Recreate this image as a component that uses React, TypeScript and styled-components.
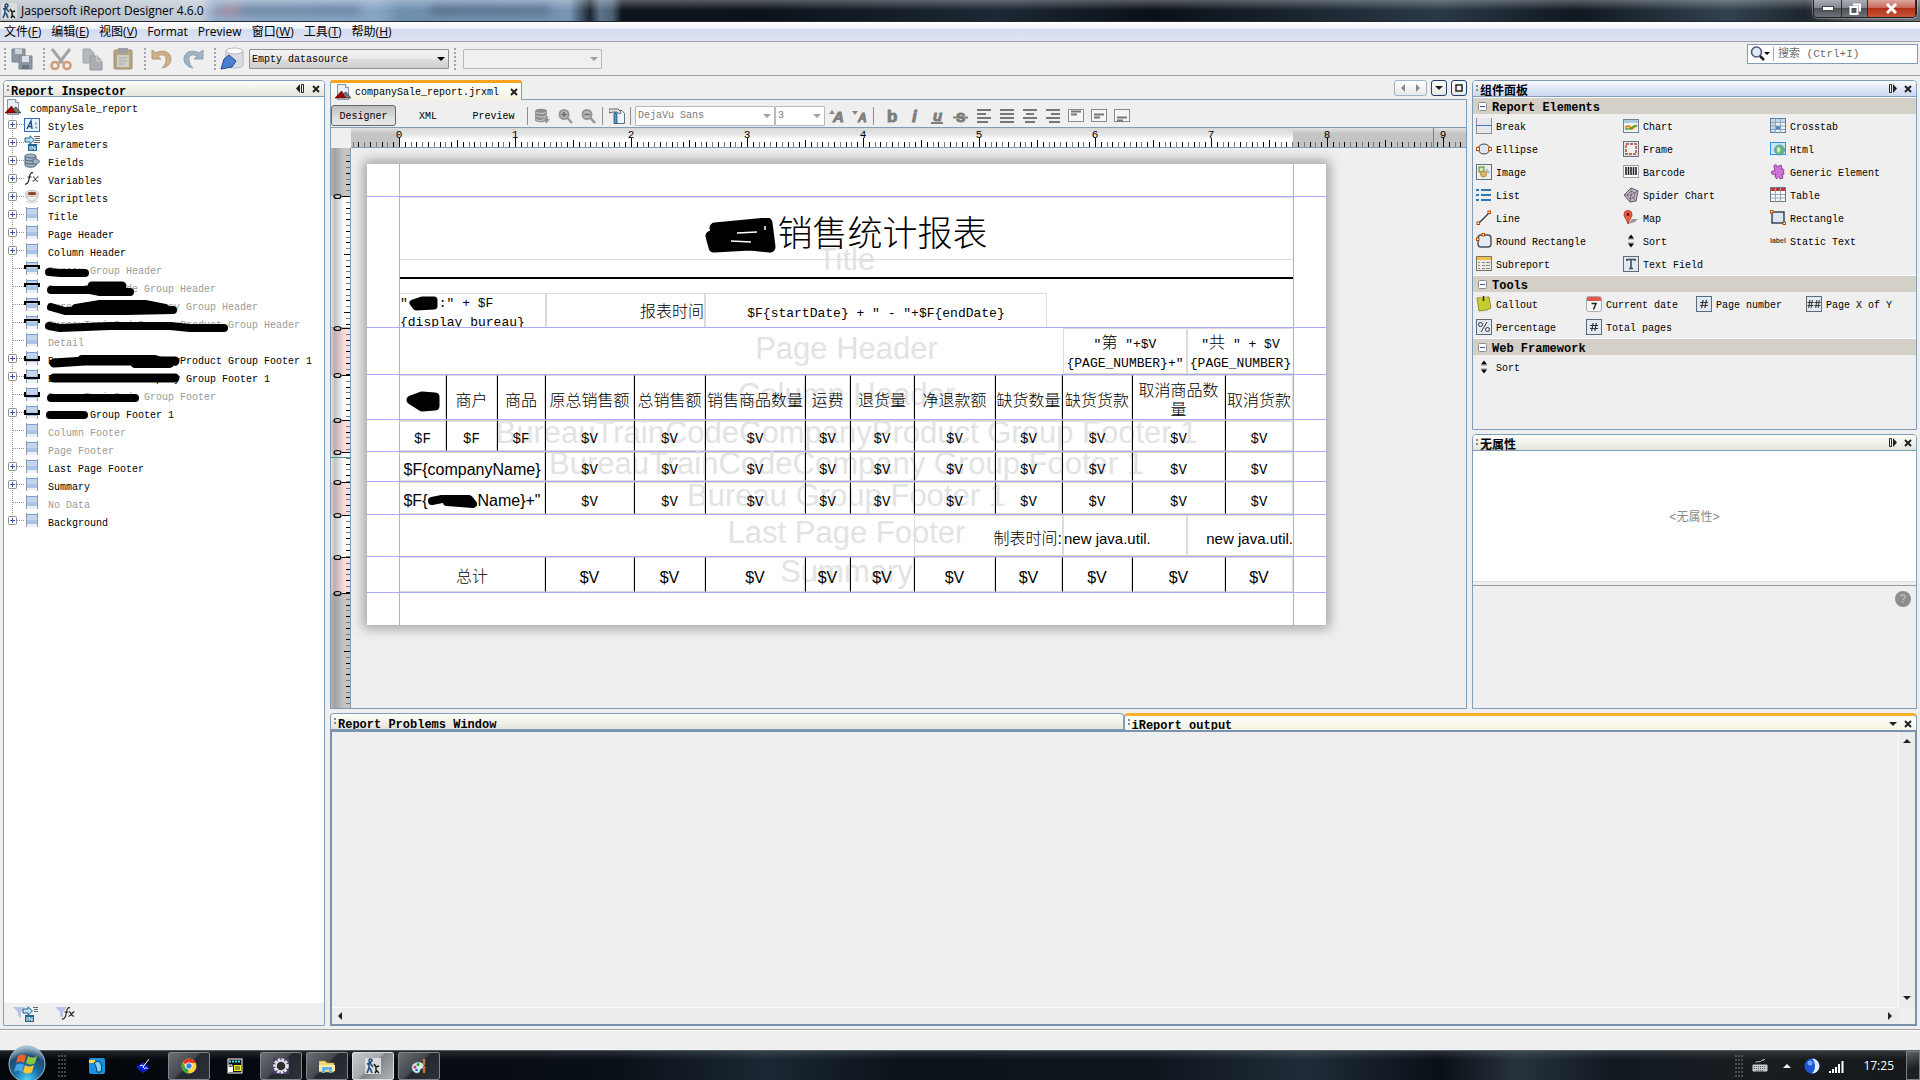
import React from "react";
import styled, { createGlobalStyle, css } from "styled-components";

const mono = '"Liberation Mono", "Noto Sans CJK SC", monospace';
const sans = '"Liberation Sans", "Noto Sans CJK SC", sans-serif';
const ui = '"Open Sans", "Noto Sans CJK SC", sans-serif';
const line = "#7f9db9";

const GlobalStyle = createGlobalStyle`
  * { box-sizing: border-box; }
  html, body { margin: 0; height: 100%; overflow: hidden; }
  body { background: #efefef; color: #000; font: 10px/16px ${mono}; }
  button { font: inherit; color: inherit; background: none; border: 0; padding: 0; margin: 0; text-align: left; }
  svg { display: block; flex: none; }
`;

const Shell = styled.div`
  display: flex;
  flex-direction: column;
  height: 100vh;
`;

/* ---------- window frame ---------- */
const TitleBar = styled.header`
  position: relative;
  display: flex;
  align-items: center;
  justify-content: space-between;
  height: 22px;
  flex: none;
  padding-left: 1px;
  border-bottom: 1px solid #23282e;
  background:
    linear-gradient(180deg, rgba(255, 255, 255, 0.3), rgba(255, 255, 255, 0) 50%),
    linear-gradient(90deg, #b9c0c9 0, #c4ccd6 200px, #8fa9c6 216px, #86a3c4 380px, #6f8fae 400px, #7894b4 570px, #1b2632 590px, #5c7287 600px, #4f6377 612px, #0d141c 622px, #0c131b 40%, #1d2834 52%, #0a1017 60%, #2b3947 75%, #101820 82%, #33424f 90%, #1d262e 94%, #5b6167 97%, #6a6f75 100%);
`;
const TitleText = styled.h1`
  position: relative;
  display: flex;
  align-items: center;
  gap: 4px;
  margin: 0;
  font: 12px/20px ${ui};
`;
const Smudge = styled.div`
  position: absolute;
  left: 240px;
  top: 6px;
  width: 120px;
  height: 9px;
  background: #4f6683;
  opacity: 0.5;
  filter: blur(4px);
  box-shadow: 190px 0 0 #3f536b, -24px 0 0 -2px #d44;
`;
const WinButtons = styled.div`
  display: flex;
  align-self: flex-start;
  margin-right: 3px;
  border: 1px solid #1b1f24;
  border-top: 0;
  border-radius: 0 0 5px 5px;
  overflow: hidden;
  box-shadow: 0 0 0 1px rgba(255, 255, 255, 0.3);
`;
const WinButton = styled.button<{ $w: number; $close?: boolean }>`
  display: flex;
  justify-content: center;
  align-items: center;
  width: ${(p) => p.$w}px;
  height: 17px;
  border-right: 1px solid #2a2f35;
  background: ${(p) =>
    p.$close
      ? "linear-gradient(#d9a79d, #c9685a 45%, #b23118 50%, #c8553a)"
      : "linear-gradient(#a8adb3, #83898f 45%, #4b5157 50%, #6c7278)"};
`;
const MenuBar = styled.nav`
  display: flex;
  gap: 10px;
  height: 20px;
  flex: none;
  padding-left: 4px;
  border-bottom: 1px solid #a0a0a0;
  background: linear-gradient(#fff, #eef1f9 35%, #d5dcef 40%, #dee4f5);
  font: 12px/20px ${ui};
`;

/* ---------- toolbar ---------- */
const Toolbar = styled.div`
  display: flex;
  align-items: flex-start;
  justify-content: space-between;
  height: 34px;
  flex: none;
  padding: 2px 2px 0 2px;
  border-bottom: 1px solid #a0a0a0;
`;
const ToolGroup = styled.div<{ $gap: number }>`
  display: flex;
  align-items: center;
  height: 30px;
  gap: ${(p) => p.$gap}px;
`;
const Grip = styled.span<{ $wide?: boolean }>`
  width: 2px;
  height: 22px;
  flex: none;
  margin: ${(p) => (p.$wide ? "0 2px 0 0" : "0 -3px 0 2px")};
  background: repeating-linear-gradient(#a5a5a5 0 2px, transparent 2px 4px);
`;
const SelectBox = styled.span<{ $w: number; $dim?: boolean; $flat?: boolean }>`
  position: relative;
  display: block;
  width: ${(p) => p.$w}px;
  height: 20px;
  flex: none;
  select {
    appearance: none;
    width: 100%;
    height: 100%;
    margin: 0;
    padding: 1px 16px 0 2px;
    border: 1px solid ${(p) => (p.$dim ? "#b5b9c0" : "#8a8f96")};
    border-radius: 1px;
    background: ${(p) => (p.$flat ? "#fff" : p.$dim ? "#f0f0f0" : "linear-gradient(#f2f2f2, #ebebeb 48%, #ddd 52%, #cfcfcf)")};
    color: ${(p) => (p.$dim ? "#7a7a7a" : "#000")};
    opacity: 1;
    font: 10px/16px ${mono};
  }
  &::after {
    content: "";
    position: absolute;
    right: 4px;
    top: 8px;
    border: 4px solid transparent;
    border-top-color: ${(p) => (p.$dim ? "#a0a0a0" : "#000")};
  }
`;
const Search = styled.label`
  display: flex;
  align-items: center;
  gap: 3px;
  width: 171px;
  height: 20px;
  padding-left: 2px;
  border: 1px solid ${line};
  background: #fff;
  input {
    flex: 1;
    min-width: 0;
    border: 0;
    border-left: 1px solid #aaa;
    padding: 0 0 0 4px;
    height: 14px;
    outline: 0;
    background: none;
    font: 11px/14px ${mono};
  }
  input::placeholder { color: #6d6d6d; opacity: 1; }
`;

/* ---------- docking areas ---------- */
const Work = styled.main`
  display: flex;
  flex: 1;
  min-height: 0;
  gap: 5px;
  padding: 4px 3px 3px;
`;
const Column = styled.div<{ $w?: number }>`
  display: flex;
  flex-direction: column;
  gap: 4px;
  min-width: 0;
  min-height: 0;
  ${(p) => (p.$w ? css`width: ${p.$w}px; flex: none;` : css`flex: 1;`)}
`;
const TopRow = styled.div`
  display: flex;
  flex: 1;
  gap: 5px;
  min-height: 0;
`;
const Panel = styled.section<{ $h?: number }>`
  display: flex;
  flex-direction: column;
  min-height: 0;
  border: 1px solid ${line};
  border-radius: 4px 4px 0 0;
  ${(p) => (p.$h ? css`height: ${p.$h}px; flex: none;` : css`flex: 1;`)}
`;
const PanelHead = styled.header<{ $blue?: boolean }>`
  display: flex;
  align-items: center;
  gap: 7px;
  height: 16px;
  flex: 1 1 16px;
  max-height: 16px;
  padding: 0 4px 0 3px;
  overflow: hidden;
  border-radius: 3px 3px 0 0;
  border-bottom: 1px solid ${line};
  background: ${(p) => (p.$blue ? "linear-gradient(#fbfcff, #e2e8f8 45%, #cdd8ef)" : "linear-gradient(#fefefb, #f1f1ea 50%, #e4e4dc)")};
  h2 {
    flex: 1;
    margin: 0;
    padding-top: 7px;
    font: bold 12px/14px ${mono};
    white-space: nowrap;
  }
  h2::before {
    content: "";
    display: inline-block;
    width: 2px;
    height: 6px;
    margin-right: 2px;
    vertical-align: 4px;
    background: linear-gradient(#888 2px, transparent 2px 4px, #888 4px);
  }
`;

/* ---------- tree ---------- */
const Tree = styled.ul`
  flex: 1;
  margin: 0;
  padding: 1px 0 0;
  list-style: none;
  background: #fff;
`;
const TreeRow = styled.li<{ $dim?: boolean; $root?: boolean }>`
  display: flex;
  align-items: center;
  height: 18px;
  padding-left: ${(p) => (p.$root ? 1 : 4)}px;
  gap: ${(p) => (p.$root ? 9 : 8)}px;
  color: ${(p) => (p.$dim ? "#9a9a9a" : "#000")};
`;
const Branch = styled.button`
  display: flex;
  align-items: center;
  width: 16px;
  height: 18px;
  margin-right: -8px;
`;
const Label = styled.span`
  position: relative;
  padding-top: 5px;
  white-space: nowrap;
`;
const Ink = styled.svg`
  position: absolute;
  left: -8px;
  top: 1px;
  overflow: visible;
`;
const Footer = styled.div`
  display: flex;
  align-items: center;
  gap: 16px;
  height: 22px;
  flex: none;
  padding-left: 9px;
  background: #efefef;
`;

/* ---------- editor ---------- */
const Editor = styled.section`
  display: flex;
  flex-direction: column;
  flex: 1;
  min-width: 0;
`;
const TabStrip = styled.div`
  display: flex;
  justify-content: space-between;
  height: 19px;
  flex: none;
`;
const FileTab = styled.div`
  display: flex;
  align-items: center;
  gap: 4px;
  width: 192px;
  height: 20px;
  padding-left: 4px;
  border: 1px solid ${line};
  border-top: 3px solid #f9a31c;
  border-bottom: 0;
  border-radius: 3px 3px 0 0;
  background: linear-gradient(#fff, #f4f3e0);
  z-index: 1;
  button:first-of-type { flex: 1; padding-top: 3px; }
  button:last-of-type { margin-right: 3px; }
`;
const TabNav = styled.div`
  display: flex;
  gap: 4px;
  height: 16px;
`;
const NavButton = styled.button<{ $w: number; $dim?: boolean }>`
  display: flex;
  align-items: center;
  justify-content: space-around;
  width: ${(p) => p.$w}px;
  border: 1px solid ${(p) => (p.$dim ? "#9db4cc" : "#1d3e6e")};
  border-radius: 3px;
  background: linear-gradient(#fff, #e8e8e8);
`;
const EditorBody = styled.div`
  display: flex;
  flex-direction: column;
  flex: 1;
  min-height: 0;
  border: 1px solid ${line};
`;
const DesignBar = styled.div`
  display: flex;
  align-items: center;
  height: 28px;
  flex: none;
  padding-top: 4px;
  border-bottom: 1px solid ${line};
`;
const Mode = styled.button<{ $on?: boolean; $w: number }>`
  width: ${(p) => p.$w}px;
  height: 21px;
  padding-top: 2px;
  text-align: center;
  border: 1px solid transparent;
  border-radius: 3px;
  ${(p) => p.$on && css`border-color: #666; background: linear-gradient(#bdbdbd, #dedede 60%, #e8e8e8);`}
`;
const Icons = styled.div<{ $gap?: number; $pad?: string }>`
  display: flex;
  align-items: center;
  gap: ${(p) => p.$gap ?? 7}px;
  padding: ${(p) => p.$pad ?? "0 6px"};
`;
const Sep = styled.span`
  width: 1px;
  height: 18px;
  background: #8c8c8c;
`;
const RulerRow = styled.div`
  display: flex;
  height: 20px;
  flex: none;
`;
const Corner = styled.div`
  width: 20px;
  flex: none;
`;
const HRuler = styled.div`
  flex: 1;
  min-width: 0;
  overflow: hidden;
  border-bottom: 1px solid ${line};
  background: linear-gradient(#e2e2e2, #c4c4c4 30%, #c4c4c4);
`;
const CanvasRow = styled.div`
  display: flex;
  flex: 1;
  min-height: 0;
`;
const VRuler = styled.div`
  width: 20px;
  flex: none;
  overflow: hidden;
  border-right: 1px solid ${line};
`;
const Canvas = styled.div`
  flex: 1;
  min-width: 0;
  overflow: hidden;
  padding: 16px;
`;

/* ---------- report page ---------- */
const Page = styled.div`
  position: relative;
  width: 959px;
  padding: 32px 0;
  background: #fff;
  box-shadow: 0 0 11px 4px #a6a6a6;
`;
const Margin = styled.i<{ $right?: boolean }>`
  position: absolute;
  top: 0;
  bottom: 0;
  width: 1px;
  background: #aaaaff;
  ${(p) => (p.$right ? "right: 32px;" : "left: 32px;")}
`;
const Band = styled.div<{ $h: number }>`
  position: relative;
  height: ${(p) => p.$h}px;
  padding: 0 32px;
  border-top: 1px solid #aaaaff;
  font: 13px/19px ${mono};
`;
const Watermark = styled.div`
  position: absolute;
  inset: 0;
  display: flex;
  align-items: center;
  justify-content: center;
  padding-bottom: 6px;
  color: #e3e3e3;
  font: 31px/31px ${sans};
  white-space: nowrap;
`;
const Cells = styled.div<{ $cols: string; $black?: boolean }>`
  position: relative;
  display: grid;
  grid-template-columns: ${(p) => p.$cols};
  height: 100%;
  width: 895px;
  ${(p) => p.$black && css`border-right: 1px solid #000;`}
`;
const Cell = styled.div<{ $black?: boolean; $align?: string; $bare?: boolean }>`
  display: flex;
  align-items: center;
  justify-content: ${(p) => p.$align ?? "center"};
  min-width: 0;
  padding-top: 6px;
  text-align: center;
  ${(p) => !p.$bare && css`border: 1px solid #dcdcdc;`}
  ${(p) => p.$black && css`border-left-color: #000;`}
`;
const ValueCell = styled(Cell)`
  padding-top: 8px;
  font-size: 14px;
`;
const HeadCell = styled(Cell)`
  padding-top: 7px;
  font-size: 16px;
  font-weight: 300;
`;
const SansCell = styled(Cell)<{ $size: number }>`
  padding-top: 5px;
  font: ${(p) => p.$size}px/19px ${sans};
`;
const Cjk = styled.span`
  font-size: 16px;
  font-weight: 300;
`;
const TitleBox = styled.div`
  position: relative;
  display: flex;
  align-items: center;
  justify-content: center;
  height: 63px;
  width: 895px;
  padding-top: 16px;
  border: 1px solid #dcdcdc;
  font: 300 35px/40px ${mono};
`;
const Rule = styled.div`
  position: relative;
  width: 895px;
  height: 2px;
  margin: 17px 0 14px;
  background: #000;
`;
const ParamRow = styled.div`
  position: relative;
  display: grid;
  grid-template-columns: 147px 159px 342px;
  height: 35px;
`;
const TopText = styled(Cell)`
  display: block;
  padding-top: 0;
  overflow: hidden;
  text-align: left;
  white-space: nowrap;
`;
const InlineInk = styled.svg`
  display: inline-block;
  vertical-align: middle;
`;

/* ---------- palette ---------- */
const Section = styled.button`
  display: flex;
  align-items: center;
  gap: 5px;
  height: 17px;
  width: 100%;
  padding-left: 5px;
  border-top: 1px solid #fff;
  background: #d4cfc7;
  font: bold 12px/16px ${mono};
  span { padding-top: 3px; }
`;
const Items = styled.div<{ $cols: number; $w: number }>`
  display: grid;
  grid-template-columns: repeat(${(p) => p.$cols}, ${(p) => p.$w}px);
  grid-auto-rows: 23px;
  padding-left: 3px;
`;
const Item = styled.button`
  display: flex;
  align-items: center;
  gap: 4px;
  white-space: nowrap;
  span { padding-top: 4px; }
`;
const Empty = styled.div`
  display: flex;
  align-items: center;
  justify-content: center;
  height: 131px;
  padding-top: 4px;
  background: #fff;
  border-bottom: 1px solid #ddd;
  color: #8a8a8a;
  font: 12px/16px ${mono};
`;
const Help = styled.div`
  display: flex;
  justify-content: flex-end;
  margin-top: 3px;
  border-top: 1px solid #999;
  padding: 5px 5px 0 0;
  button {
    width: 16px;
    height: 16px;
    border-radius: 8px;
    background: #8c8c8c;
    color: #b4b4b4;
    text-align: center;
    font: bold 12px/16px ${sans};
  }
`;

/* ---------- output ---------- */
const Output = styled.section`
  display: flex;
  flex-direction: column;
  height: 313px;
  flex: none;
`;
const OutTabs = styled.div`
  display: flex;
  height: 17px;
  flex: none;
`;
const OutTab = styled.div<{ $on?: boolean }>`
  display: flex;
  flex: 1;
  border: 1px solid ${line};
  border-bottom: 0;
  border-radius: 4px 4px 0 0;
  overflow: hidden;
  ${(p) => p.$on && css`border-top: 3px solid #fbb02a; h2 { padding-top: 4px; } header { background: linear-gradient(#fff, #f4f3e0); }`}
`;
const OutBody = styled.div`
  display: grid;
  grid-template: 1fr 17px / 1fr 17px;
  flex: 1;
  border: 2px solid #7b92ae;
`;
const Scroll = styled.div<{ $v?: boolean }>`
  display: flex;
  justify-content: space-between;
  align-items: center;
  ${(p) => (p.$v ? "flex-direction: column; padding: 5px 0; border-left: 1px solid #fafafa;" : "padding: 0 4px; border-top: 1px solid #fafafa;")}
  background: #ececec;
`;

const StatusBar = styled.footer`
  height: 21px;
  flex: none;
  border-top: 1px solid #a0a0a0;
  box-shadow: inset 0 1px 0 #fff;
`;

/* ---------- taskbar ---------- */
const Taskbar = styled.footer`
  display: flex;
  align-items: center;
  justify-content: space-between;
  height: 30px;
  flex: none;
  border-top: 1px solid #4d6068;
  background:
    linear-gradient(rgba(255, 255, 255, 0.12), transparent 30%),
    linear-gradient(90deg, #03060a, #070b12 20%, #0a1017 32%, #1b2733 40%, #0b1219 47%, #0e151d 60%, #202c38 68%, #0a0f16 75%, #27323d 79%, #111921 84%, #191d20 92%, #15181a);
`;
const TaskLeft = styled.div`
  display: flex;
  align-items: center;
  height: 100%;
  gap: 4px;
`;
const Orb = styled.button`
  width: 38px;
  height: 36px;
  margin: -6px 8px 0 8px;
`;
const TaskBtn = styled.button<{ $kind?: "open" | "active" }>`
  display: flex;
  align-items: center;
  justify-content: center;
  width: 42px;
  height: 28px;
  border-radius: 2px;
  ${(p) => p.$kind === "open" && css`border: 1px solid #80868c; background: linear-gradient(135deg, #6a6f74, #44494f 45%, #24292f 50%, #2b3137);`}
  ${(p) => p.$kind === "active" && css`border: 1px solid #dadcde; background: linear-gradient(135deg, #c6c8ca, #a8abae 45%, #808488 50%, #b0b3b6);`}
`;
const Dots = styled.span<{ $after?: number }>`
  width: 8px;
  height: 22px;
  margin-right: ${(p) => p.$after ?? 0}px;
  background: radial-gradient(circle at 1px 1px, #6b7176 1px, transparent 1px) 0 0 / 3px 4px;
  opacity: 0.6;
`;
const Tray = styled.div`
  display: flex;
  align-items: center;
  height: 100%;
  color: #fff;
  font: 12px/20px ${ui};
`;
const TrayIcon = styled.button<{ $gap: number }>`
  margin-left: ${(p) => p.$gap}px;
`;
const ShowDesktop = styled.button`
  width: 14px;
  height: 29px;
  margin-left: 12px;
  border: 1px solid #7a8084;
  background: linear-gradient(160deg, #5c6164, #1d2022 60%);
`;

/* ---------- icons ---------- */
const S = ({ s = 16, children, vb }: { s?: number; children: React.ReactNode; vb?: string }) => (
  <svg width={s} height={s} viewBox={vb ?? "0 0 16 16"} fill="none" aria-hidden="true">{children}</svg>
);
const Cross = () => <S s={8} vb="0 0 8 8"><path d="M1 1l6 6M7 1L1 7" stroke="#222" strokeWidth="2" /></S>;
const Dock = ({ flip }: { flip?: boolean }) => (
  <svg width="9" height="9" viewBox="0 0 9 9" aria-hidden="true">
    <g transform={flip ? "matrix(-1 0 0 1 9 0)" : undefined}><path d="M4 0v9L0 4.500z" fill="#222" /><path d="M5.500 .5h2v8h-2z" fill="#fff" stroke="#222" /></g>
  </svg>
);
const Tri = ({ d, c = "#222" }: { d: "l" | "r" | "d" | "u"; c?: string }) => (
  <S s={8} vb="0 0 8 8"><path fill={c} d={{ l: "M6 0v8L2 4z", r: "M2 0v8l4-4z", d: "M0 2h8L4 6z", u: "M0 6h8L4 2z" }[d]} /></S>
);
const Minus = () => (
  <S s={9} vb="0 0 9 9"><rect x=".5" y=".5" width="8" height="8" rx="1" fill="#fff" stroke="#8c8c8c" /><path d="M2 4.500h5" stroke="#3a56a0" /></S>
);
const JrIcon = () => (
  <S><path d="M2.500 .5h8l3 3v12h-11z" fill="#e7eef6" stroke="#8195ab" /><path d="M10.500 .5v3h3" fill="#fff" stroke="#8195ab" /><path d="M0 14L6.500 7 11 14z" fill="#a00" stroke="#300" strokeWidth=".6" /><path d="M8 10l3-2 5 6h-5z" fill="#777" stroke="#222" strokeWidth=".6" /></S>
);
const AppIcon = () => (
  <S><rect width="16" height="16" fill="#dcdcdc" /><path d="M4 2.500a1.500 1.500 0 110 .1M2 6l3-1 3 4M4 6v4l-2 5M5 10l2 5" stroke="#234e7c" strokeWidth="1.600" /><path d="M9 6l2 3 3-1M11 9v3l3 3M12 12l-2 3" stroke="#111" strokeWidth="1.400" /></S>
);
const BandIcon = ({ mark }: { mark?: "h" | "f" }) => (
  <S>
    <rect x="2" y="1" width="12" height="13" fill="#c4d6ee" /><rect x="2" y="7" width="12" height="4" fill="#a9c4e6" /><rect x="2" y="11" width="12" height="3" fill="#eef2f7" />
    <path d="M2.500 0v14M13.500 0v14" stroke="#8b99ab" /><path d="M3 1.500h10" stroke="#7d9fd6" />
    {mark === "h" && <path d="M1 8V5h14v3" stroke="#000" strokeWidth="2" />}
    {mark === "f" && <path d="M1 5v4h14V5" stroke="#000" strokeWidth="2" />}
  </S>
);
const StylesIcon = () => (
  <S><rect x=".5" y="1.500" width="15" height="13" fill="#e8f1fb" stroke="#2d6db5" /><path d="M3 12l4-8 1 8M4.500 9.500h3" stroke="#1c4f96" strokeWidth="1.400" /><path d="M11 6.500h2M11 10.500h2" stroke="#7ba3d0" strokeWidth="2" /></S>
);
const ParamIcon = () => (
  <S><path d="M1 3h5V.8L10.500 5 6 9V7H1z" fill="#bfe0f2" stroke="#22628e" /><path d="M10 1.500h6M11 3.500h5M11 5.500h5M10 7.500h6" stroke="#666" /><rect x="4" y="9" width="9" height="7" fill="#1f6690" /><path d="M6 11v4M8 15v-4l3 4v-4" stroke="#fff" /></S>
);
const DbIcon = ({ c = "#9fb2c4", k = "#45586b" }: { c?: string; k?: string }) => (
  <S><path d="M1 3v9c0 3 11 3 11 0V3" fill={c} /><ellipse cx="6.500" cy="3" rx="5.500" ry="2" fill={c} stroke={k} strokeWidth=".8" /><path d="M1 6c0 2.500 11 2.500 11 0M1 9c0 2.500 11 2.500 11 0M1 12c0 3 11 3 11 0M1 3v9M12 3v9" stroke={k} strokeWidth=".9" /><path d="M9 6h4l3 2.500-3 2.500H9z" fill={c} stroke={k} strokeWidth=".7" /></S>
);
const QueryIcon = () => (
  <S><path d="M1 3v9c0 3 12 3 12 0V3c0-3-12-3-12 0z" fill="#8f8f8f" /><path d="M1.500 4c2 2 9 2 11 0M1.500 7.500c2 2 9 2 11 0M1.500 11c2 2 6 2 8 1" stroke="#c9c9c9" /><path d="M11 8v3H8.500l4 4.500 3.500-4.500h-2V8z" fill="#8f8f8f" stroke="#ddd" strokeWidth=".5" /></S>
);
const FxIcon = () => (
  <S><path d="M9 2c-2-1-3 1-3.500 4S4 14 1 13M3.500 6h4" stroke="#222" strokeWidth="1.200" /><path d="M9 6c2-1 2 5 5 4M14.500 6c-2-1-3.500 5-6 4" stroke="#222" /></S>
);
const CupIcon = () => (
  <S><path d="M2 4c0 6 2 8 6 8s6-2 6-8z" fill="#eee" stroke="#bbb" /><ellipse cx="8" cy="4.500" rx="6.500" ry="3" fill="#f6f6f6" stroke="#bbb" /><ellipse cx="8" cy="4.500" rx="4.500" ry="1.800" fill="#8d4a28" /><path d="M2 12c3 2 9 2 12 0" stroke="#ccc" /></S>
);

const palette: Record<string, React.ReactNode> = {
  Break: <S><rect x=".5" width="15" height="15" fill="#e6e8eb" /><path d="M.5 0v16M15.500 0v16M0 15.500h16" stroke="#8b8f95" /><path d="M0 7.500h16" stroke="#3e74c9" /></S>,
  Ellipse: <S><ellipse cx="8" cy="8" rx="6" ry="5" fill="#dce6f0" stroke="#444" /><rect x=".5" y="6.500" width="3" height="3" fill="#fff" stroke="#b34700" /><rect x="12.500" y="6.500" width="3" height="3" fill="#fff" stroke="#b34700" /></S>,
  Image: <S><rect x=".5" y=".5" width="15" height="15" fill="#e9eff5" stroke="#66727f" /><rect x="3" y="3" width="5" height="5" fill="#cfe8b5" stroke="#4a8a1f" /><path d="M11 4l3 5H9z" fill="#a9bccd" /><circle cx="7.500" cy="10" r="3" fill="#e8b55c" stroke="#946818" strokeWidth=".6" /></S>,
  List: <S><path d="M0 3h3M5 3h10M0 8h3M5 8h10M0 13h3M5 13h10" stroke="#2f78b4" strokeWidth="2" /></S>,
  Line: <S><path d="M3 13L13 3" stroke="#333" strokeWidth="1.200" /><rect x="1" y="12" width="2.500" height="2.500" fill="#fff" stroke="#b34700" /><rect x="12" y="1" width="2.500" height="2.500" fill="#fff" stroke="#b34700" /></S>,
  "Round Rectangle": <S><rect x="2" y="2" width="13" height="12" rx="3" fill="#e3eaf1" stroke="#4a4f57" strokeWidth="1.400" /><rect x="6" y=".5" width="2.500" height="2.500" fill="#fff" stroke="#b34700" /><rect x=".5" y="5" width="2.500" height="2.500" fill="#fff" stroke="#b34700" /></S>,
  Subreport: <S><rect x=".5" y=".5" width="15" height="14" fill="#eceae2" stroke="#7b7464" /><rect x="1" y="1" width="14" height="3" fill="#efc14a" /><path d="M2 6.500h2M6 6.500h3M10 6.500h4M2 9.500h2M6 9.500h3M10 9.500h4M2 12.500h2M6 12.500h3M10 12.500h4" stroke="#888" /></S>,
  Chart: <S><rect x=".5" y="1.500" width="15" height="13" fill="#eef4f8" stroke="#6c8295" /><rect x="1" y="2" width="14" height="3" fill="#a9cbe0" /><path d="M2 9l4-1 3 3 5-4" stroke="#e38a16" strokeWidth="2" /><path d="M2 11h5l4-3h3" stroke="#4fa02a" strokeWidth="1.500" /></S>,
  Frame: <S><rect x=".5" y=".5" width="15" height="15" fill="#dde6ef" stroke="#66727f" /><rect x="3" y="3" width="10" height="10" fill="#eef2f6" stroke="#b8461c" strokeDasharray="3 1" strokeWidth="1.400" /></S>,
  Barcode: <S><rect x=".5" y="1.500" width="15" height="12" fill="#fff" stroke="#8fa3b5" /><path d="M3 3v8M5.500 3v8M8 3v8M10.500 3v8M13 3v8" stroke="#222" strokeWidth="1.600" /></S>,
  "Spider Chart": <S><path d="M8 1l7 3-2 10-6 1-6-7z" fill="#c9b9cf" stroke="#5b5360" /><path d="M8 4l4 2-1 5-4 1-3-4zM8 1v7L1 8M8 8l7-4M8 8l5 6M8 8l-1 7" stroke="#6c5f73" strokeWidth=".8" /></S>,
  Map: <S><path d="M5 14l4-5h6l-3 3z" fill="#999" /><path d="M5 14C4 9 1 8 1 4.500a4 4 0 018 0C9 8 6 9 5 14z" fill="#ee5b4c" stroke="#a5291c" strokeWidth=".8" /><circle cx="5" cy="4.500" r="1.400" fill="#5b0f0a" /></S>,
  Sort: <S><path d="M8 1.500l3 4H5zM8 14.500l3-4H5z" fill="#000" /><path d="M5 6.500h6M5 9.500h6" stroke="#bbb" /></S>,
  "Text Field": <S><rect x=".5" y=".5" width="15" height="15" fill="#e1eaf3" stroke="#5d6c7b" /><path d="M4 5V3.500h8V5M8 4v8M6 12.500h4" stroke="#3f4b57" strokeWidth="1.600" /></S>,
  Crosstab: <S><rect x=".5" y=".5" width="15" height="14" fill="#edf2f7" stroke="#5f7f9f" /><path d="M1 1h14v3H1zM1 1h4v13H1z" fill="#c3d5e8" /><rect x="6" y="8" width="5" height="3" fill="#4d7fc1" /><path d="M5.500 1v14M10.500 1v14M1 4.500h14M1 8h14M1 11.500h14" stroke="#8ba7c2" /></S>,
  Html: <S><rect x=".5" y="1.500" width="15" height="12" fill="#cfe3f5" stroke="#2196f3" /><circle cx="9.500" cy="9" r="5" fill="#6db774" stroke="#4a90c4" strokeWidth=".8" /><path d="M7 7c2-2 4 1 3 3s-2 2-3 0" fill="#d3eed6" /></S>,
  "Generic Element": <S><path d="M4 3c-1-3 4-3 3 0h1l2-2 2 1-1 3c3-1 4 2 2 3l1 1c0 2-1 2-2 1l1 4-3 1c0-3-3-3-3 0L5 13l1-3c-3 2-6-1-4-3l3 0z" fill="#cf74d8" stroke="#7d2f87" strokeWidth=".8" /></S>,
  Table: <S><rect x=".5" y=".5" width="15" height="14" fill="#f6f8f9" stroke="#6f7b86" /><rect x="1" y="1" width="14" height="3" fill="#c03a34" /><path d="M5.500 1v14M10.500 1v14M1 7.500h14M1 11h14" stroke="#97a5b2" /></S>,
  Rectangle: <S><rect x="2" y="2" width="12" height="11" fill="#dde5ee" stroke="#2e3d52" strokeWidth="1.400" /><rect x=".5" y=".5" width="2.500" height="2.500" fill="#fff" stroke="#b34700" /><rect x="13" y="12" width="2.500" height="2.500" fill="#fff" stroke="#b34700" /></S>,
  "Static Text": <S><text x="0" y="10" fontFamily="Liberation Sans" fontSize="7" fontWeight="bold" fill="#444">label</text></S>,
  Callout: <S><path d="M1 2l12-1 2 11-4 2-8 1z" fill="#c8cc34" stroke="#7d7c1c" strokeWidth=".8" /><path d="M5 1.500h5" stroke="#eee27b" strokeWidth="2" /><path d="M7.500 0v5" stroke="#222" strokeWidth="1.600" /></S>,
  "Current date": <S><rect x=".5" y=".5" width="15" height="15" rx="2" fill="#f4f4f4" stroke="#aaa" /><path d="M1 2.500C1 1 2 1 3 1h10c2 0 2 1 2 3v1H1z" fill="#e4574c" /><path d="M5.500 7.500h4.500L7.500 13.500" stroke="#222" strokeWidth="1.500" /></S>,
};
const Boxed = ({ children }: { children: React.ReactNode }) => <S><rect x=".5" y=".5" width="15" height="15" fill="#e1eaf3" stroke="#5d6c7b" />{children}</S>;
const hash = (x: number, w: number) => `M${x + w * 0.4} 4l-${w * 0.2} 8M${x + w * 0.8} 4l-${w * 0.2} 8M${x} 6.500h${w}M${x} 9.500h${w}`;
palette["Page number"] = <Boxed><path d={hash(4, 8)} stroke="#333" strokeWidth="1.200" /></Boxed>;
palette["Total pages"] = palette["Page number"];
palette["Page X of Y"] = <Boxed><path d={hash(1.5, 6)} stroke="#333" /><path d={hash(8.5, 6)} stroke="#333" /></Boxed>;
palette["Percentage"] = <Boxed><path d="M11 3L5 13" stroke="#333" /><circle cx="4.500" cy="5.500" r="2" stroke="#333" /><circle cx="11.500" cy="10.500" r="2" stroke="#333" /></Boxed>;

const elements = ["Break", "Chart", "Crosstab", "Ellipse", "Frame", "Html", "Image", "Barcode", "Generic Element", "List", "Spider Chart", "Table", "Line", "Map", "Rectangle", "Round Rectangle", "Sort", "Static Text", "Subreport", "Text Field"];
const tools = ["Callout", "Current date", "Page number", "Page X of Y", "Percentage", "Total pages"];

/* ---------- data ---------- */
type Node = { t: string; icon?: React.ReactNode; dim?: boolean; mark?: "h" | "f"; ink?: [string, number][] };
const nodes: Node[] = [
  { t: "Styles", icon: <StylesIcon /> },
  { t: "Parameters", icon: <ParamIcon /> },
  { t: "Fields", icon: <DbIcon /> },
  { t: "Variables", icon: <FxIcon /> },
  { t: "Scriptlets", icon: <CupIcon /> },
  { t: "Title" },
  { t: "Page Header" },
  { t: "Column Header" },
  { t: "Bureau Group Header", dim: true, mark: "h", ink: [["M9 12L20 13H45", 8]] },
  { t: "BureauTrainCode Group Header", dim: true, mark: "h", ink: [["M11 12H50L60 14H90", 8], ["M52 8H82", 9]] },
  { t: "BureauTrainCodeCompany Group Header", dim: true, mark: "h", ink: [["M11 11L25 15H85L133 14", 8], ["M36 13L60 9H105L125 13", 10]] },
  { t: "BureauTrainCodeCompanyProduct Group Header", dim: true, mark: "h", ink: [["M9 12L20 14 70 12H130L150 14H184", 8]] },
  { t: "Detail", dim: true },
  { t: "BureauTrainCodeCompanyProduct Group Footer 1", mark: "f", ink: [["M14 13L45 11H135", 9], ["M42 9H115L130 14H95", 8]] },
  { t: "BureauTrainCodeCompany Group Footer 1", mark: "f", ink: [["M14 10H135", 9]] },
  { t: "BureauTrainCode Group Footer", dim: true, mark: "f", ink: [["M11 12H95", 8]] },
  { t: "Bureau Group Footer 1", mark: "f", ink: [["M10 11H44", 8]] },
  { t: "Column Footer", dim: true },
  { t: "Page Footer", dim: true },
  { t: "Last Page Footer" },
  { t: "Summary" },
  { t: "No Data", dim: true },
  { t: "Background" },
];
const menu: [string, string][] = [["文件", "F"], ["编辑", "E"], ["视图", "V"], ["Format", ""], ["Preview", ""], ["窗口", "W"], ["工具", "T"], ["帮助", "H"]];
const full = "47px 51px 48px 89px 71px 100px 45px 64px 81px 67px 70px 93px 68px";
const merged = "146px 89px 71px 100px 45px 64px 81px 67px 70px 93px 68px";
const heads = ["商户", "商品", "原总销售额", "总销售额", "销售商品数量", "运费", "退货量", "净退款额", "缺货数量", "缺货货款", "取消商品数量", "取消货款"];
const ten = Array.from({ length: 10 }, (_, i) => i);

const HorizontalRuler = () => (
  <svg width="1130" height="19" aria-hidden="true">
    <defs><linearGradient id="hr" x2="0" y2="1"><stop offset="0" stopColor="#d8d8d8" /><stop offset=".35" stopColor="#e6e6e6" /><stop offset=".6" stopColor="#fff" /></linearGradient></defs>
    <rect x="48" width="894" height="19" fill="url(#hr)" />
    {Array.from({ length: 196 }, (_, i) => {
      const k = i - 8;
      const x = Math.round(48 + k * 5.8) + 0.5;
      const h = k % 20 === 0 ? 9 : k % 10 === 0 ? 7 : 5;
      return <path key={i} d={`M${x} 19v-${h}`} stroke={k % 5 === 0 || k % 2 ? "#000" : "#777"} />;
    })}
    {ten.map((n) => <text key={n} x={48 + n * 116} y="10" fontSize="11" textAnchor="middle" fontFamily="Liberation Mono">{n}</text>)}
    <path d="M1082.500 0v19" stroke="#3f9c9c" />
  </svg>
);
const segs: [number, number, string][] = [[48, 131, "#fff"], [180, 47, "#fadcdc"], [227, 45, "#fff"], [272, 32, "#fadcdc"], [304, 30, "#fff"], [334, 33, "#fadcdc"], [367, 42, "#fff"], [409, 36, "#fadcdc"], [445, 400, "#c4c4c4"]];
const VerticalRuler = () => (
  <svg width="19" height="900" aria-hidden="true">
    <defs><linearGradient id="vr"><stop offset="0" stopColor="#777" stopOpacity=".2" /><stop offset=".2" stopColor="#777" stopOpacity=".45" /><stop offset=".7" stopColor="#777" stopOpacity="0" /></linearGradient></defs>
    <rect width="19" height="900" fill="#c4c4c4" />
    {segs.map(([y, h, c], i) => (
      <g key={i}>
        <rect y={y} width="19" height={h} fill={c} />
        {Array.from({ length: Math.floor(h / 5.8) + 1 }, (_, k) => (
          <path key={k} d={`M19 ${Math.round(y + k * 5.8) + 0.5}h-${k === 0 ? 8 : k % 10 === 0 ? 6 : 4}`} stroke={k % 2 && k ? "#777" : "#000"} />
        ))}
      </g>
    ))}
    {Array.from({ length: 8 }, (_, k) => <path key={k} d={`M19 ${Math.round(48 - k * 5.8) + 0.5}h-4`} stroke={k % 2 ? "#777" : "#000"} />)}
    <rect width="19" height="900" fill="url(#vr)" />
    {segs.map(([y], i) => <ellipse key={i} cx="6.500" cy={y + 0.5} rx="3.500" ry="2" fill="none" stroke="#000" strokeWidth="1.200" />)}
    <path d="M0 309.500h19" stroke="#4d9090" />
  </svg>
);

const g = "#8a8a8a";
const Fmt = ({ children, label }: { children: React.ReactNode; label: string }) => <button aria-label={label}><S>{children}</S></button>;
const Glyph = ({ c, size, x, italic }: { c: string; size: number; x: number; italic?: boolean }) => (
  <text x={x} y="14" fontFamily="Liberation Sans" fontWeight="bold" fontStyle={italic ? "italic" : "normal"} fontSize={size} fill="#7f7f7f" stroke="#7f7f7f" strokeWidth="1">{c}</text>
);
const bars = (w: number[], x: (n: number) => number) => w.map((n, i) => <path key={i} d={`M${x(n)} ${2 + i * 4}h${n}`} stroke="#777" strokeWidth="2" />);
const HeadIcons = ({ flip }: { flip?: boolean }) => (<><button aria-label="Minimize"><Dock flip={flip} /></button><button aria-label="Close"><Cross /></button></>);

const VCells = ({ name, summary }: { name: React.ReactNode; summary?: boolean }) => (
  <Cells $cols={merged} $black>
    {summary ? <HeadCell $black>{name}</HeadCell> : <SansCell $black $size={16}>{name}</SansCell>}
    {ten.map((i) => summary ? <SansCell key={i} $black $size={16}>$V</SansCell> : <ValueCell key={i} $black>$V</ValueCell>)}
  </Cells>
);

export default function App() {
  return (
    <Shell>
      <GlobalStyle />
      <TitleBar>
        <Smudge />
        <TitleText><AppIcon />Jaspersoft iReport Designer 4.6.0</TitleText>
        <WinButtons>
          <WinButton $w={28} aria-label="Minimize window"><svg width="12" height="5"><rect x=".5" y=".5" width="11" height="4" fill="#fff" stroke="#444" /></svg></WinButton>
          <WinButton $w={26} aria-label="Restore window"><S s={12} vb="0 0 12 12"><path d="M4 1.500h7v7M1.500 4h7v7h-7z" stroke="#fff" strokeWidth="2" /></S></WinButton>
          <WinButton $w={48} $close aria-label="Close window"><S s={11} vb="0 0 11 11"><path d="M1 1l9 9M10 1L1 10" stroke="#fff" strokeWidth="3" /></S></WinButton>
        </WinButtons>
      </TitleBar>
      <MenuBar>
        {menu.map(([t, k]) => <button key={t}>{t}{k && <>(<u>{k}</u>)</>}</button>)}
      </MenuBar>
      <Toolbar>
        <ToolGroup $gap={7}>
          <Grip />
          <button aria-label="Save all"><S s={24} vb="0 0 24 24"><path d="M2 2h13v13H2z" fill="#8b97a2" stroke="#7b858f" /><path d="M5 2h7v5H5z" fill="#cdd2d6" /><path d="M9 9h13v13H9z" fill="#8b97a2" stroke="#7b858f" /><path d="M12 9h7v6h-7z" fill="#dfe2e4" /><path d="M12 18h7v4h-7z" fill="#6a747d" /></S></button>
          <Grip />
          <button aria-label="Cut"><S s={24} vb="0 0 24 24"><path d="M3 2l11 14M21 2L10 16" stroke="#a0a5a9" strokeWidth="3" /><circle cx="6" cy="18.500" r="3.500" stroke="#cf9f7c" strokeWidth="2.600" /><circle cx="18" cy="18.500" r="3.500" stroke="#cf9f7c" strokeWidth="2.600" /></S></button>
          <button aria-label="Copy"><S s={24} vb="0 0 24 24"><path d="M3 2h7l4 4v10H3z" fill="#b5b9bd" stroke="#a0a4a8" /><path d="M10 9h7l5 5v9H10z" fill="#a9aeb3" stroke="#94999e" /><path d="M17 9v5h5" stroke="#d8dadc" /></S></button>
          <button aria-label="Paste"><S s={24} vb="0 0 24 24"><rect x="3" y="3" width="18" height="19" rx="1" fill="#b7a582" stroke="#a08f6e" /><rect x="7" y="1" width="10" height="5" fill="#9a9ea2" /><path d="M6 8h12v12H6z" fill="#cfcfca" /><path d="M8 11h8M8 14h8M8 17h5" stroke="#a7a7a2" /></S></button>
          <Grip />
          <button aria-label="Undo"><S s={24} vb="0 0 24 24"><path d="M2 3v9h9L8 9c5-3 9 0 8 5-.5 3-2 5-4 7 6-1 9-5 9-9 0-7-8-10-15-6z" fill="#cdb088" stroke="#b59a74" /></S></button>
          <button aria-label="Redo"><S s={24} vb="0 0 24 24"><path d="M22 3v9h-9l3-3c-5-3-9 0-8 5 .5 3 2 5 4 7-6-1-9-5-9-9 0-7 8-10 15-6z" fill="#9fb4c4" stroke="#8a9fb0" /></S></button>
          <Grip />
          <ToolGroup $gap={5}>
            <button aria-label="Report datasources"><S s={24} vb="0 0 24 24"><path d="M6 4v14c0 4 17 4 17 0V4" fill="#d9dcdf" stroke="#b5b9bd" /><ellipse cx="14.500" cy="4" rx="8.500" ry="3" fill="#fafafa" stroke="#b8b8b8" /><path d="M1 22l3-10 5-4 7 6-4 6z" fill="#4a7fd0" stroke="#274d92" /></S></button>
            <SelectBox $w={200}><select aria-label="Datasource" defaultValue="e"><option value="e">Empty datasource</option></select></SelectBox>
            <Grip $wide />
            <SelectBox $w={139} $dim><select aria-label="Connection" disabled><option> </option></select></SelectBox>
          </ToolGroup>
        </ToolGroup>
        <Search>
          <S s={20} vb="0 0 20 20"><circle cx="6.500" cy="8" r="5" fill="#dcebf7" stroke="#557" strokeWidth="1.600" /><path d="M10 12l4 4" stroke="#222" strokeWidth="2.500" /><path d="M14 8h6l-3 3z" fill="#000" /></S>
          <input type="search" aria-label="搜索" placeholder="搜索 (Ctrl+I)" />
        </Search>
      </Toolbar>

      <Work>
        <Column $w={322}>
          <Panel>
            <PanelHead><h2>Report Inspector</h2><HeadIcons /></PanelHead>
            <Tree>
              <TreeRow $root><JrIcon /><Label>companySale_report</Label></TreeRow>
              {nodes.map((n) => (
                <TreeRow key={n.t} $dim={n.dim}>
                  <Branch aria-label={`Expand ${n.t}`}>
                    <svg width="16" height="18" aria-hidden="true">
                      <path d={n.t === "Background" ? "M4.500 0v9" : "M4.500 0v18"} stroke="#999" strokeDasharray="1 1" />
                      <path d="M5 8.500h11" stroke="#999" strokeDasharray="1 1" />
                      {!n.dim && <><rect x=".5" y="4.500" width="8" height="8" rx="1" fill="#fff" stroke="#8c8c8c" /><path d="M2 8.500h5M4.500 6v5" stroke="#3a56a0" /></>}
                    </svg>
                  </Branch>
                  {n.icon ?? <BandIcon mark={n.mark} />}
                  <Label>
                    {n.t}
                    {n.ink && <Ink width="200" height="20">{n.ink.map(([d, w], i) => <path key={i} d={d} stroke="#000" strokeWidth={w} fill="none" strokeLinecap="round" strokeLinejoin="round" />)}</Ink>}
                  </Label>
                </TreeRow>
              ))}
            </Tree>
            <Footer>
              <button aria-label="Filter parameters"><svg width="26" height="16" viewBox="0 0 26 16"><path d="M0 1h12L8 6v6l-3-2V6z" fill="#b9c3ea" /><g transform="translate(9 0)"><path d="M1 3h5V.8L10.500 5 6 9V7H1z" fill="#bfe0f2" stroke="#22628e" /><path d="M11 1.500h5M12 3.500h4M12 5.500h4" stroke="#666" /><rect x="3" y="9" width="9" height="7" fill="#1f6690" /><path d="M5 11v4M7 15v-4l3 4v-4" stroke="#fff" fill="none" /></g></svg></button>
              <button aria-label="Filter variables"><svg width="22" height="16" viewBox="0 0 22 16" fill="none"><path d="M0 1h12L8 6v6l-3-2V6z" fill="#b9c3ea" /><path d="M15 2c-2-1-3 1-3.500 4S10 14 7 13M9.500 6h4M14 6c2-1 2 5 5 4M19.500 6c-2-1-3.500 5-6 4" stroke="#222" strokeWidth="1.200" /></svg></button>
            </Footer>
          </Panel>
        </Column>

        <Column>
          <TopRow>
            <Editor>
              <TabStrip>
                <FileTab><JrIcon /><button>companySale_report.jrxml</button><button aria-label="Close tab"><Cross /></button></FileTab>
                <TabNav>
                  <NavButton $w={33} $dim aria-label="Scroll tabs"><Tri d="l" c="#888" /><Tri d="r" c="#888" /></NavButton>
                  <NavButton $w={16} aria-label="Tab list"><Tri d="d" /></NavButton>
                  <NavButton $w={16} aria-label="Maximize"><S s={8} vb="0 0 8 8"><rect x="1" y="1" width="6" height="6" stroke="#222" strokeWidth="1.500" /></S></NavButton>
                </TabNav>
              </TabStrip>
              <EditorBody>
                <DesignBar>
                  <Mode $on $w={65}>Designer</Mode><Mode $w={64}>XML</Mode><Mode $w={67}>Preview</Mode>
                  <Sep />
                  <Icons>
                    <button aria-label="Query"><QueryIcon /></button>
                    {["Zoom in", "Zoom out"].map((p) => <Fmt key={p} label={p}><circle cx="7" cy="6.500" r="4.500" fill="#b8b8b8" stroke="#959595" strokeWidth="2" /><path d="M10.500 10l4.500 5" stroke="#979797" strokeWidth="2.500" /><path d={p === "Zoom in" ? "M4.500 6.500h5M7 4v5" : "M4.500 6.500h5"} stroke="#666" strokeWidth="1.500" /></Fmt>)}
                  </Icons>
                  <Sep />
                  <Icons $pad="0 5px 0 6px"><button aria-label="Compile"><S><path d="M6 2.500h7l2.500 3v10H6z" fill="#eef5fa" stroke="#54738a" /><path d="M0 1h9l3 3-1 2-3-2H4L0 5z" fill="#e4e8eb" stroke="#444" strokeWidth=".8" /><path d="M5 5h3v10.500H5z" fill="#4f9bd0" stroke="#1d4f78" strokeWidth=".8" /></S></button></Icons>
                  <Sep />
                  <Icons $gap={0} $pad="0 4px 0 4px">
                    <SelectBox $w={140} $dim $flat><select aria-label="Font" disabled><option>DejaVu Sans</option></select></SelectBox>
                    <SelectBox $w={50} $dim $flat><select aria-label="Font size" disabled><option>3</option></select></SelectBox>
                  </Icons>
                  <Icons $pad="0 5px 0 0">
                    <Fmt label="Increase font"><path d="M0 6l3-4 3 4z" fill={g} /><Glyph c="A" size={15} x={4} italic /></Fmt>
                    <Fmt label="Decrease font"><path d="M0 3l3 4 3-4z" fill={g} /><Glyph c="A" size={12} x={6} italic /></Fmt>
                  </Icons>
                  <Sep />
                  <Icons $pad="0 10px">
                    <Fmt label="Bold"><Glyph c="b" size={17} x={3} /></Fmt>
                    <Fmt label="Italic"><Glyph c="i" size={17} x={5} italic /></Fmt>
                    <Fmt label="Underline"><g transform="translate(0 -1)"><Glyph c="u" size={15} x={3} italic /></g><path d="M1 15h12" stroke="#7f7f7f" strokeWidth="2" /></Fmt>
                    <Fmt label="Strike"><Glyph c="s" size={17} x={3} /><path d="M0 9.500h15" stroke="#7f7f7f" strokeWidth="2" /></Fmt>
                    <Fmt label="Align left">{bars([14, 9, 14, 11], () => 1)}</Fmt>
                    <Fmt label="Justify">{bars([14, 14, 14, 14], () => 1)}</Fmt>
                    <Fmt label="Align center">{bars([14, 8, 14, 10], (n) => 8 - n / 2)}</Fmt>
                    <Fmt label="Align right">{bars([14, 9, 14, 11], (n) => 15 - n)}</Fmt>
                    {[3.5, 6.5, 9.5].map((y) => <Fmt key={y} label={`Vertical ${y}`}><rect x=".5" y="1.500" width="15" height="12" stroke={g} fill="#f6f6f6" /><path d={`M3 ${y}h10M3 ${y + 3}h6`} stroke="#777" strokeWidth="2" /></Fmt>)}
                  </Icons>
                </DesignBar>
                <RulerRow><Corner /><HRuler><HorizontalRuler /></HRuler></RulerRow>
                <CanvasRow>
                  <VRuler><VerticalRuler /></VRuler>
                  <Canvas>
                    <Page>
                      <Band $h={131}>
                        <Watermark>Title</Watermark>
                        <TitleBox>
                          <svg width="72" height="38" viewBox="0 0 72 38" aria-hidden="true"><path d="M10 10L62 5 65 29 45 27 9 29 6 18 62 12 12 22 58 20" fill="#000" stroke="#000" strokeWidth="11" strokeLinejoin="round" strokeLinecap="round" /><path d="M32 15l20-1M26 23l20 1M60 8v4" stroke="#fff" strokeWidth="1.500" /></svg>
                          销售统计报表
                        </TitleBox>
                        <Rule />
                        <ParamRow>
                          <TopText>"<InlineInk width="31" height="15" viewBox="0 0 31 15" fill="#000" aria-hidden="true"><path d="M5 7L14 4H26V10L8 11z" stroke="#000" strokeWidth="7" strokeLinejoin="round" /></InlineInk>:" + $F<br />{"{display bureau}"}</TopText>
                          <Cell $align="flex-end"><Cjk>报表时间</Cjk></Cell>
                          <Cell>{'$F{startDate} + " - "+$F{endDate}'}</Cell>
                        </ParamRow>
                      </Band>
                      <Band $h={47}>
                        <Watermark>Page Header</Watermark>
                        <Cells $cols="664px 124px 107px"><Cell $bare /><Cell><span>"<Cjk>第</Cjk> "+$V<br />{'{PAGE_NUMBER}+"'}</span></Cell><Cell><span>"<Cjk>共</Cjk> " + $V<br />{"{PAGE_NUMBER}"}</span></Cell></Cells>
                      </Band>
                      <Band $h={45}>
                        <Watermark>Column Header</Watermark>
                        <Cells $cols={full} $black>
                          <HeadCell $black><svg width="36" height="22" viewBox="0 0 36 22"><path d="M6 9L17 5 30 6V15L17 16z" stroke="#000" strokeWidth="9" strokeLinejoin="round" /></svg></HeadCell>
                          {heads.map((h) => <HeadCell key={h} $black>{h}</HeadCell>)}
                        </Cells>
                      </Band>
                      <Band $h={32}>
                        <Watermark>BureauTrainCodeCompanyProduct Group Footer 1</Watermark>
                        <Cells $cols={full} $black>
                          {[0, 1, 2].map((i) => <ValueCell key={i} $black>$F</ValueCell>)}
                          {ten.map((i) => <ValueCell key={i} $black>$V</ValueCell>)}
                        </Cells>
                      </Band>
                      <Band $h={30}><Watermark>BureauTrainCodeCompany Group Footer 1</Watermark><VCells name={"$F{companyName}"} /></Band>
                      <Band $h={33}>
                        <Watermark>Bureau Group Footer 1</Watermark>
                        <VCells name={<>{"$F{"}<svg width="50" height="16" viewBox="0 0 50 16" aria-hidden="true"><path d="M5 8L15 6H42L46 11 20 9" stroke="#000" strokeWidth="8" fill="none" strokeLinecap="round" strokeLinejoin="round" /></svg>{'Name}+"'}</>} />
                      </Band>
                      <Band $h={42}>
                        <Watermark>Last Page Footer</Watermark>
                        <Cells $cols="515px 149px 124px 107px"><Cell $bare /><SansCell $size={16} $align="flex-end"><Cjk>制表时间:</Cjk></SansCell><SansCell $size={15} $align="flex-start">new java.util.</SansCell><SansCell $size={15} $align="flex-end">new java.util.</SansCell></Cells>
                      </Band>
                      <Band $h={36}><Watermark>Summary</Watermark><VCells summary name="总计" /></Band>
                      <Band $h={1} />
                      <Margin /><Margin $right />
                    </Page>
                  </Canvas>
                </CanvasRow>
              </EditorBody>
            </Editor>

            <Column $w={445}>
              <Panel $h={350}>
                <PanelHead $blue><h2>组件面板</h2><HeadIcons flip /></PanelHead>
                <Section><Minus /><span>Report Elements</span></Section>
                <Items $cols={3} $w={147}>{elements.map((e) => <Item key={e}>{palette[e]}<span>{e}</span></Item>)}</Items>
                <Section><Minus /><span>Tools</span></Section>
                <Items $cols={4} $w={110}>{tools.map((e) => <Item key={e}>{palette[e]}<span>{e}</span></Item>)}</Items>
                <Section><Minus /><span>Web Framework</span></Section>
                <Items $cols={3} $w={147}><Item>{palette.Sort}<span>Sort</span></Item></Items>
              </Panel>
              <Panel>
                <PanelHead><h2>无属性</h2><HeadIcons flip /></PanelHead>
                <Empty>&lt;无属性&gt;</Empty>
                <Help><button>?</button></Help>
              </Panel>
            </Column>
          </TopRow>

          <Output>
            <OutTabs>
              <OutTab><PanelHead><h2>Report Problems Window</h2></PanelHead></OutTab>
              <OutTab $on><PanelHead><h2>iReport output</h2><button aria-label="Minimize"><Tri d="d" /></button><button aria-label="Close"><Cross /></button></PanelHead></OutTab>
            </OutTabs>
            <OutBody>
              <div />
              <Scroll $v><button aria-label="Scroll up"><Tri d="u" /></button><button aria-label="Scroll down"><Tri d="d" /></button></Scroll>
              <Scroll><button aria-label="Scroll left"><Tri d="l" /></button><button aria-label="Scroll right"><Tri d="r" /></button></Scroll>
            </OutBody>
          </Output>
        </Column>
      </Work>
      <StatusBar />

      <Taskbar>
        <TaskLeft>
          <Orb aria-label="Start">
            <svg width="38" height="38" viewBox="0 0 38 38">
              <defs><radialGradient id="orb" cx=".5" cy=".95" r=".9"><stop offset="0" stopColor="#4fd8ff" /><stop offset=".4" stopColor="#1b6fa8" /><stop offset=".75" stopColor="#1d4a70" /><stop offset="1" stopColor="#a5bccb" /></radialGradient></defs>
              <circle cx="19" cy="19" r="18" fill="url(#orb)" stroke="#9fc0d2" />
              <path d="M10 11c3-2 6-2 8 0l-2 7c-3-2-5-2-8 0z" fill="#f0602a" /><path d="M20 11c3 2 6 2 9 0l-2 7c-3 2-6 2-9 0z" fill="#8dc63f" /><path d="M8 20c3-2 5-2 8 0l-2 7c-3-2-5-2-8 0z" fill="#4aa5e8" /><path d="M17 20c3 2 6 2 9 0l-2 7c-3 2-6 2-9 0z" fill="#fcc630" />
            </svg>
          </Orb>
          <Dots $after={6} />
          <TaskBtn aria-label="Notes"><S><rect width="16" height="16" rx="2" fill="#1e8fdd" /><path d="M0 2h6v3H0z" fill="#ffe23b" /><path d="M5 5c5-4 9 0 7 9H8c-1-3 0-5-3-9z" fill="#7ed0ff" stroke="#05345c" /></S></TaskBtn>
          <TaskBtn aria-label="SQL tool"><S><path d="M1 9l7-5 7 6-7 5z" fill="#0a1fd6" /><path d="M14 1L8 9M5 8c2-2 5 0 3 2M9 11c2-2 4-1 3 0" stroke="#fff" /></S></TaskBtn>
          <TaskBtn $kind="open" aria-label="Chrome"><S><circle cx="8" cy="8" r="7.500" fill="#fcd13a" /><path d="M8 8L1.500 4.300A7.500 7.500 0 0115 5H8z" fill="#e23b2e" /><path d="M8 8l-1 7.500A7.500 7.500 0 011.500 4.300L5 10z" fill="#3aa84a" /><circle cx="8" cy="8" r="3.600" fill="#fff" /><circle cx="8" cy="8" r="2.700" fill="#3f82e8" /></S></TaskBtn>
          <TaskBtn aria-label="Secure terminal"><S><rect x="1" y="1" width="14" height="14" fill="#111" stroke="#fff" /><path d="M2 3.500h12" stroke="#3de0e8" strokeWidth="2" strokeDasharray="2 1" /><rect x="7" y="7" width="7" height="6" fill="#f6ee3c" /><path d="M8 9h5M8 11h5" stroke="#333" /><rect x="1" y="9" width="5" height="5" fill="#fff" /><path d="M2 9V7h3v2" stroke="#fff" /></S></TaskBtn>
          <TaskBtn $kind="open" aria-label="Eclipse"><S><rect width="16" height="16" fill="#4b3a6d" /><circle cx="8" cy="8" r="6" stroke="#e6e6e6" strokeWidth="3.500" strokeDasharray="2.500 1" /><circle cx="8" cy="8" r="5" fill="#2d2d33" stroke="#e6e6e6" strokeWidth="1.500" /></S></TaskBtn>
          <TaskBtn $kind="open" aria-label="Explorer"><S><path d="M0 3h6l2 2h7v9H0z" fill="#f3d67a" stroke="#b8943a" strokeWidth=".6" /><path d="M0 7h16v6H0z" fill="#fbe9a6" /><path d="M3 15V9h10v6h-3v-3H6v3z" fill="#5fb3e6" /></S></TaskBtn>
          <TaskBtn $kind="active" aria-label="iReport"><AppIcon /></TaskBtn>
          <TaskBtn $kind="open" aria-label="Paint"><S><path d="M1 9c0-5 11-7 12-1 0 3-4 2-4 4s-1 3-3 3-5-2-5-6z" fill="#d6ecf7" stroke="#7ab" strokeWidth=".6" /><circle cx="4" cy="9" r="1.500" fill="#d33" /><circle cx="7" cy="6.500" r="1.500" fill="#2a2" /><circle cx="5.500" cy="12" r="1.300" fill="#26c" /><path d="M13 1v6M13 8v7" stroke="#c8762a" strokeWidth="2.500" /></S></TaskBtn>
        </TaskLeft>
        <Tray>
          <Dots />
          <TrayIcon $gap={9} aria-label="Keyboard"><S><rect x=".5" y="6.500" width="15" height="7" rx="1" fill="#c9cbcc" /><path d="M2 8.500h12M2 10.500h12M4 12.500h8" stroke="#555" strokeDasharray="1 1" /><path d="M4 5c0-3 4 0 5-2s3 0 4-2" stroke="#c9cbcc" /></S></TrayIcon>
          <TrayIcon $gap={15} aria-label="Hidden icons"><Tri d="u" c="#eee" /></TrayIcon>
          <TrayIcon $gap={13} aria-label="Input"><S><circle cx="8" cy="8" r="7.500" fill="#1c55d8" /><path d="M8 .5a7.500 7.500 0 010 15c4-4 4-11 0-15z" fill="#e4ecff" /><circle cx="6" cy="5" r="2.500" fill="#6fa4ff" /></S></TrayIcon>
          <TrayIcon $gap={9} aria-label="Network"><S><path d="M1 15v-2M4 15v-4M7 15V9M10 15V6M13.500 15V3" stroke="#fff" strokeWidth="2" /></S></TrayIcon>
          <TrayIcon $gap={18}>17:25</TrayIcon>
          <ShowDesktop aria-label="Show desktop" />
        </Tray>
      </Taskbar>
    </Shell>
  );
}
